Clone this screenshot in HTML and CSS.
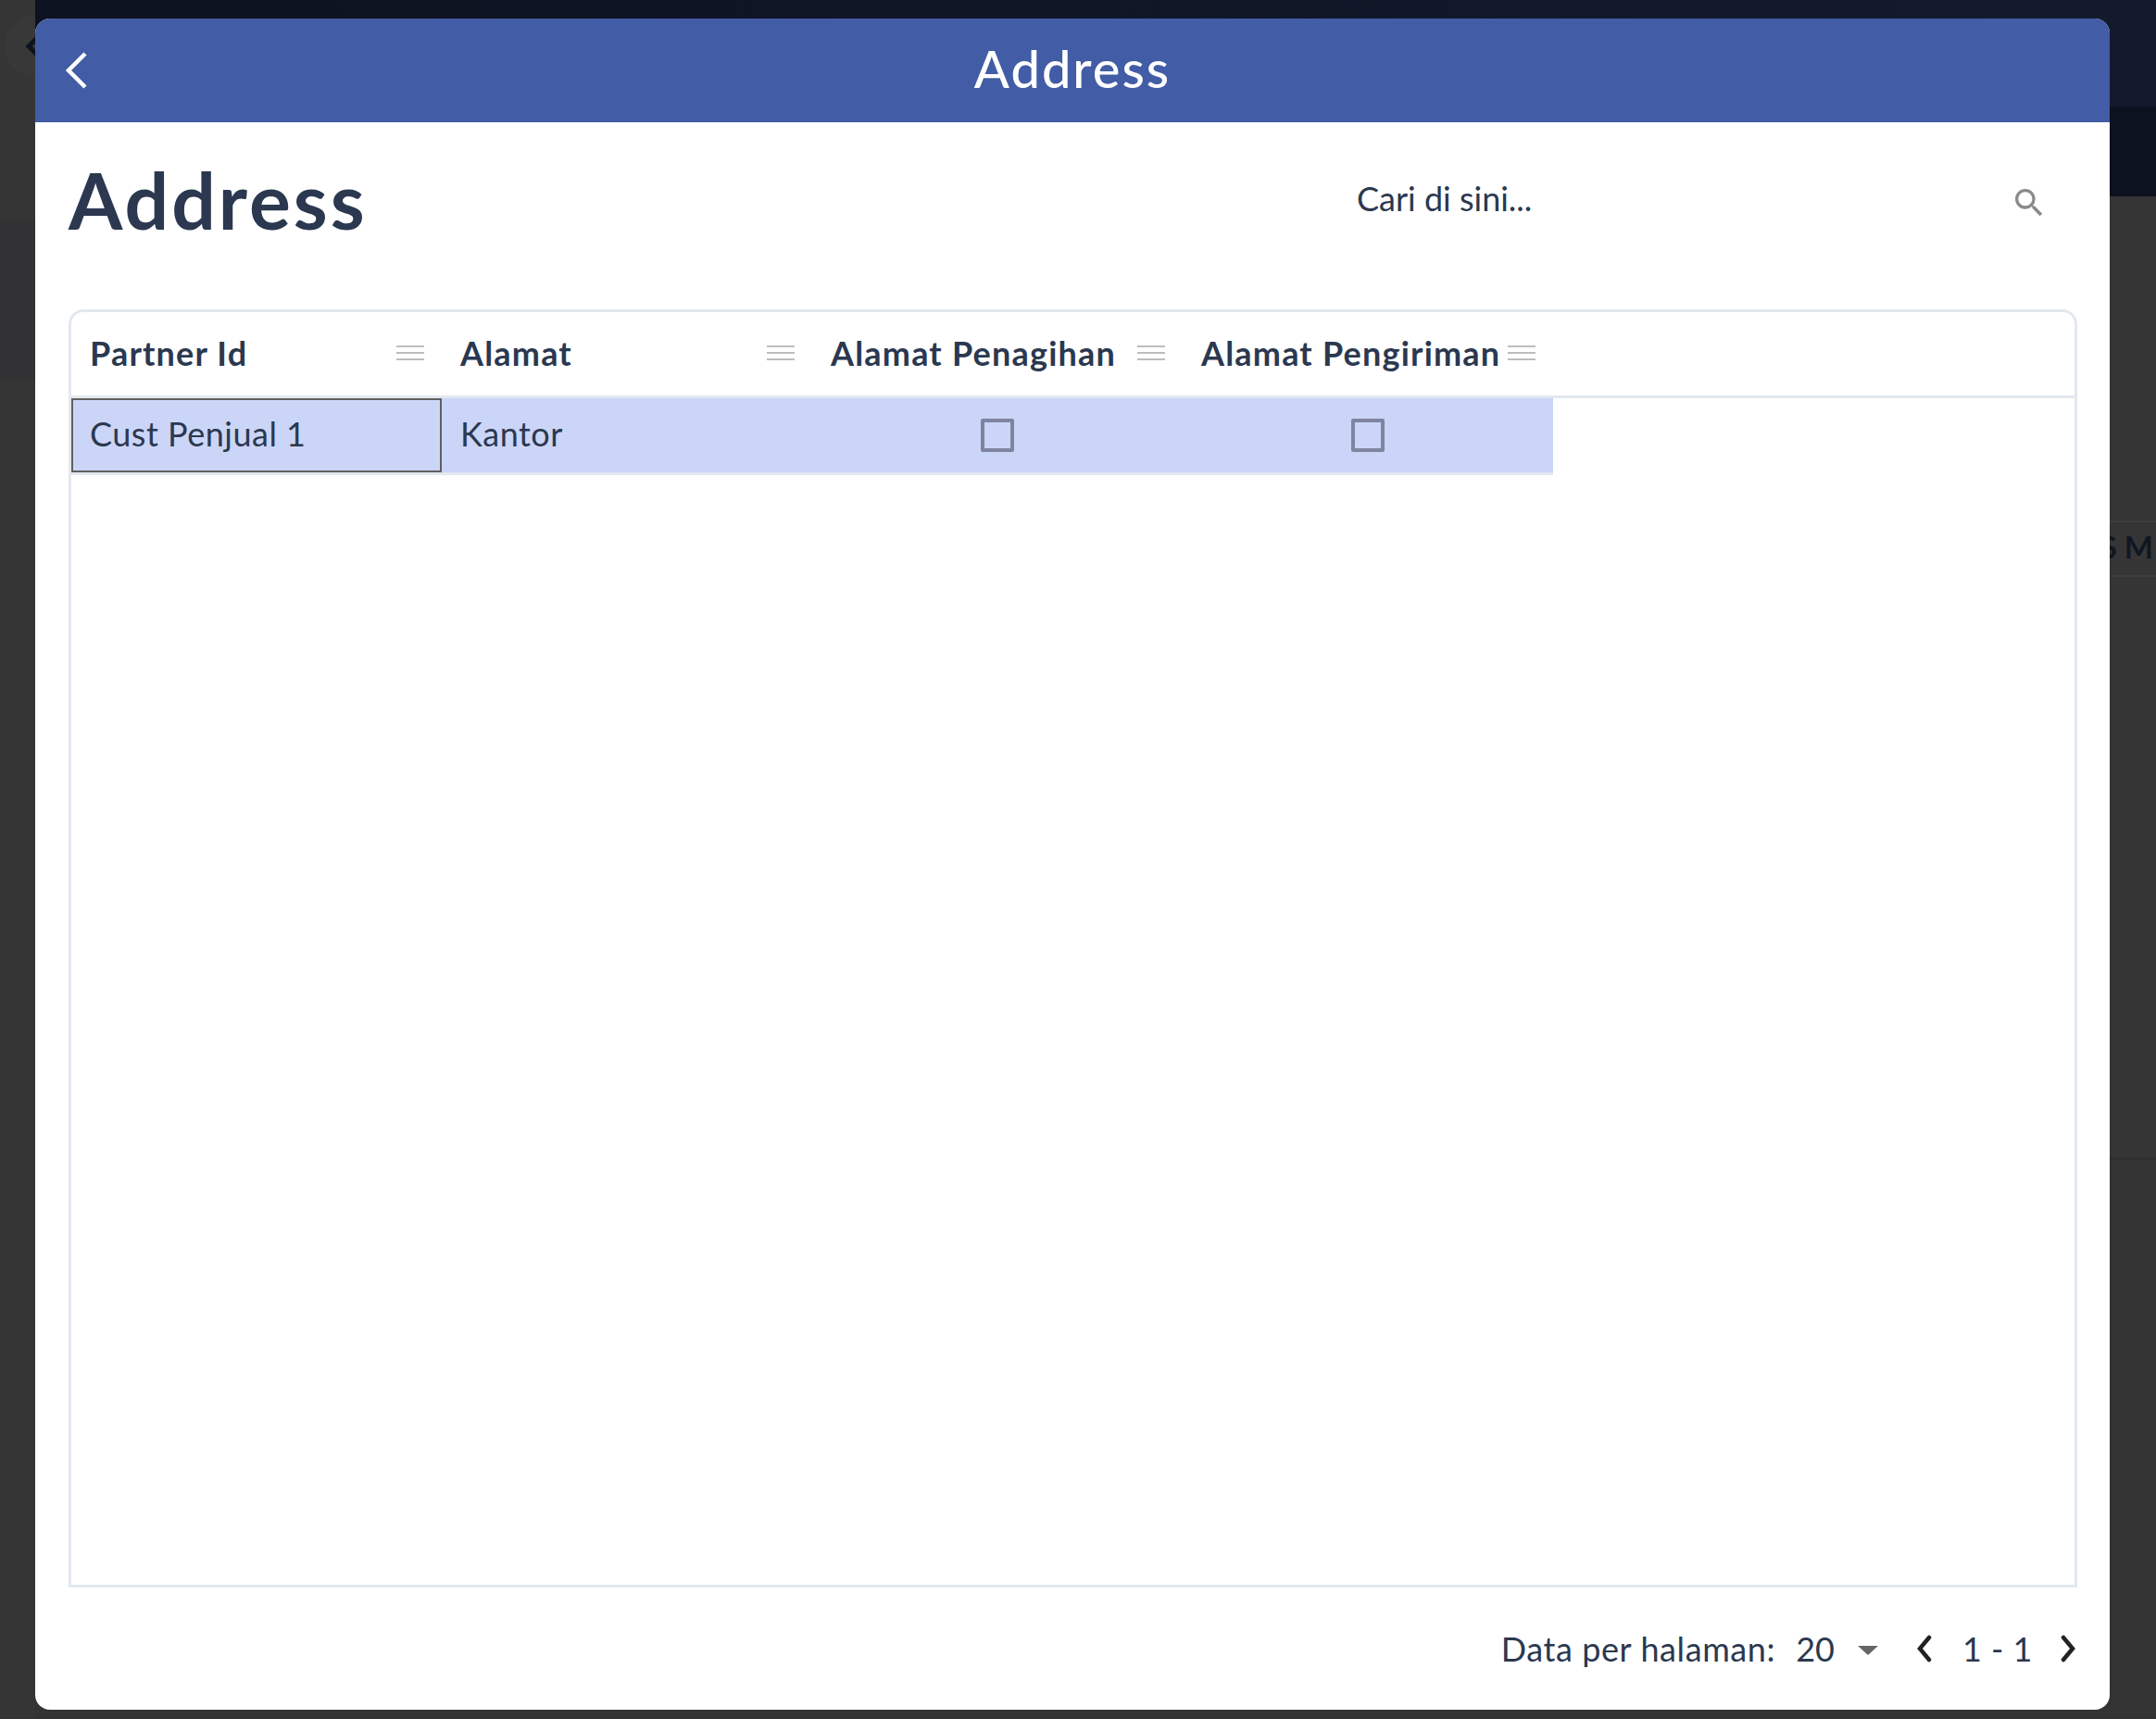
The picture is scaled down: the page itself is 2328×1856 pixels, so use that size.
FILE: index.html
```html
<!DOCTYPE html>
<html lang="id">
<head>
<meta charset="utf-8">
<title>Address</title>
<link rel="stylesheet" href="styles.css">
</head>
<body>
<div class="page">
  <aside class="page-side">
    <div class="side-circle">
      <svg width="30" height="40" viewBox="0 0 30 40"><path d="M22 6 8 20l14 14" fill="none" stroke="#0d1220" stroke-width="5"/></svg>
    </div>
    <div class="side-band"></div>
  </aside>
  <main class="page-main">
    <div class="page-nav"></div>
    <div class="page-subnav"></div>
    <div class="page-band"></div>
    <div class="page-row"><span class="page-row-text">S M</span></div>
    <div class="page-rest"></div>
  </main>
</div>
<section class="modal">
  <header class="modal-bar">
    <button class="back-btn" aria-label="Kembali">
      <svg width="28" height="44" viewBox="0 0 28 44"><path d="M26 4 8 22l18 18" fill="none" stroke="#fff" stroke-width="4.500"/></svg>
    </button>
    <h2 class="modal-title">Address</h2>
  </header>
  <div class="modal-body">
    <div class="toolbar">
      <h1 class="page-title">Address</h1>
      <div class="search">
        <span class="search-text">Cari di sini...</span>
        <svg class="search-icon" width="40" height="40" viewBox="0 0 24 24"><path fill="#8a8a8a" d="M15.500 14h-.79l-.28-.27A6.470 6.470 0 0 0 16 9.500 6.500 6.500 0 1 0 9.500 16c1.610 0 3.090-.59 4.230-1.570l.27.28v.79l5 4.990L20.490 19l-4.990-5zm-6 0C7.010 14 5 11.990 5 9.500S7.010 5 9.500 5 14 7.010 14 9.500 11.990 14 9.500 14z"/></svg>
      </div>
    </div>
    <div class="grid">
      <div class="grid-head">
        <div class="hcell"><span class="hlabel">Partner Id</span><span class="menu"><i></i><i></i><i></i></span></div>
        <div class="hcell"><span class="hlabel">Alamat</span><span class="menu"><i></i><i></i><i></i></span></div>
        <div class="hcell"><span class="hlabel">Alamat Penagihan</span><span class="menu"><i></i><i></i><i></i></span></div>
        <div class="hcell"><span class="hlabel">Alamat Pengiriman</span><span class="menu"><i></i><i></i><i></i></span></div>
      </div>
      <div class="grid-row">
        <div class="cell cell-focus">Cust Penjual 1</div>
        <div class="cell">Kantor</div>
        <div class="cell cell-center"><span class="check"></span></div>
        <div class="cell cell-center"><span class="check"></span></div>
      </div>
    </div>
    <footer class="pager">
      <span class="pager-label">Data per halaman:</span>
      <span class="pager-size">20</span>
      <span class="caret"></span>
      <svg class="chev-prev" width="20" height="30" viewBox="0 0 20 30"><path d="M15 3 5 15l10 12" fill="none" stroke="#222" stroke-width="4.500" stroke-linecap="round"/></svg>
      <span class="pager-range">1 - 1</span>
      <svg class="chev-next" width="20" height="30" viewBox="0 0 20 30"><path d="m5 3 10 12L5 27" fill="none" stroke="#222" stroke-width="4.500" stroke-linecap="round"/></svg>
    </footer>
  </div>
</section>
</body>
</html>
```
FILE: styles.css
```css
* { box-sizing: border-box; }
html, body { margin: 0; height: 100%; }
body {
  background: #353535;
  font-family: "Lato", "Liberation Sans", sans-serif;
  color: #2b3850;
  overflow: hidden;
  position: relative;
}
.page { display: flex; height: 100%; }
.page-side { width: 38px; flex: none; overflow: hidden; }
.side-circle {
  width: 66px;
  height: 66px;
  margin: 17px 0 0 5px;
  border-radius: 50%;
  background: #383838;
  display: flex;
  align-items: center;
  justify-content: center;
}
.side-band { height: 174px; margin-top: 154px; background: #323234; }
.page-main { flex: 1; display: flex; flex-direction: column; min-width: 0; }
.page-nav { height: 115px; flex: none; background: linear-gradient(90deg, #0d1220, #141a2d); }
.page-subnav { height: 97px; flex: none; background: #0d1220; }
.page-band { height: 350px; flex: none; }
.page-row {
  height: 61px;
  flex: none;
  border-top: 2px solid #3d3d3d;
  border-bottom: 2px solid #3d3d3d;
  display: flex;
  justify-content: flex-end;
  align-items: center;
  padding-bottom: 6px;
  overflow: hidden;
}
.page-row-text { font-size: 33px; font-weight: 700; color: #111722; margin-right: 3px; }
.page-rest { flex: 1; background: linear-gradient(#353535 627px, #2e2e2e 627px, #2e2e2e 629px, #333 629px); }
.modal {
  position: absolute;
  left: 38px;
  top: 20px;
  width: 2240px;
  height: 1826px;
  background: #fff;
  border-radius: 16px;
  overflow: hidden;
  display: flex;
  flex-direction: column;
}
.modal-bar {
  height: 112px;
  flex: none;
  background: #425ca5;
  display: flex;
  align-items: center;
  justify-content: center;
  padding-bottom: 6px;
  position: relative;
}
.back-btn {
  position: absolute;
  left: 28px;
  top: 34px;
  padding: 0;
  border: 0;
  background: none;
  line-height: 0;
}
.modal-title { margin: 0; color: #fff; font-size: 56px; font-weight: 500; letter-spacing: 2px; }
.modal-body { flex: 1; display: flex; flex-direction: column; padding: 0 35px 0 36px; min-height: 0; }
.toolbar { height: 202px; flex: none; display: flex; justify-content: space-between; align-items: flex-start; }
.page-title { margin: 31px 0 0; font-size: 84px; font-weight: 700; line-height: 1.25; letter-spacing: 3px; }
.search { width: 778px; height: 60px; margin-top: 52px; display: flex; align-items: center; justify-content: space-between; padding-right: 32px; }
.search-icon { margin-top: 9px; }
.search-text { font-size: 36px; }
.grid {
  flex: none;
  height: 1380px;
  border: 3px solid #e2e8f0;
  border-radius: 16px 16px 0 0;
}
.grid-head { height: 93px; display: flex; border-bottom: 3px solid #e2e8f0; }
.hcell { width: 400px; flex: none; display: flex; align-items: center; justify-content: space-between; padding: 0 19px 3px 20px; }
.hlabel { font-size: 36px; font-weight: 700; white-space: nowrap; letter-spacing: 1.2px; }
.menu { width: 30px; flex: none; display: flex; flex-direction: column; gap: 5px; margin-top: 1px; }
.menu i { display: block; height: 2px; background: #bdbdbd; }
.grid-row { width: 1600px; height: 83px; display: flex; background: #cbd5f7; border-bottom: 3px solid #e2e8f0; }
.cell { width: 400px; flex: none; display: flex; align-items: center; padding: 0 0 5px 18px; font-size: 36px; letter-spacing: .5px; border: 2px solid transparent; }
.cell-focus { border-color: #5f5f5f; }
.cell-center { justify-content: center; padding: 0; }
.check { width: 36px; height: 36px; border: 4px solid #7f84a0; border-radius: 2px; }
.pager { flex: 1; display: flex; align-items: center; justify-content: flex-end; font-size: 36px; padding-bottom: 1px; }
.pager-label { letter-spacing: .6px; }
.pager-size { margin-left: 22px; }
.caret { width: 0; height: 0; margin: 4px 0 0 25px; border-style: solid; border-width: 10px 11px 0; border-color: #666 transparent transparent; }
.chev-prev { margin-left: 40px; }
.pager-range { margin: 0 28px 0 31px; letter-spacing: .5px; }
```
